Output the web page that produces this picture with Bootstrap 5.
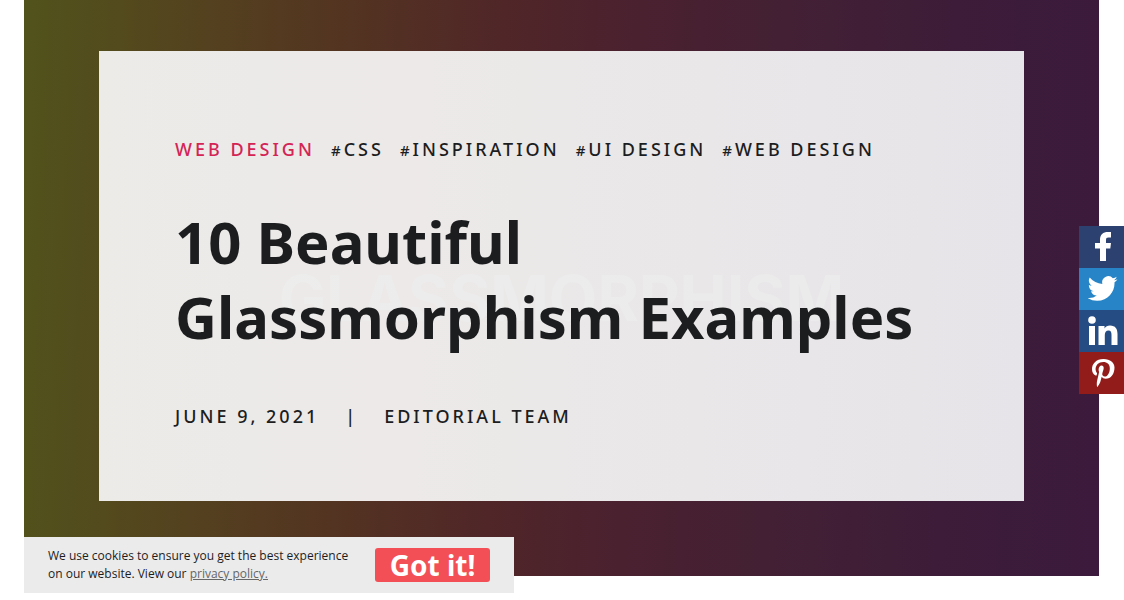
<!DOCTYPE html>
<html lang="en">
<head>
<meta charset="utf-8">
<meta name="viewport" content="width=device-width, initial-scale=1">
<title>10 Beautiful Glassmorphism Examples</title>
<link rel="stylesheet" href="https://cdn.jsdelivr.net/npm/bootstrap@5.3.0/dist/css/bootstrap.min.css">
<style>
  body { font-family: "Noto Sans", "Open Sans", sans-serif; color: #1c1d1f; background: #fff; }
  .hero {
    margin: 0 25px 24px 24px;
    padding: 51px 75px 75px;
    background: linear-gradient(92deg, #51531c 0%, #534a1d 9%, #54411f 17%, #533321 30%, #502628 44%, #4a212f 56%, #432034 70%, #3c1c38 85%, #3b1a3d 100%);
  }
  .hero-word { font: 700 63px/76px "Inter", sans-serif; color: #eff0f0; opacity: .5; padding-top: 44px; }
  .glass { min-height: 450px; padding: 75px 76px 72px; background: linear-gradient(92deg, #ecebe8, #ece9e8 35%, #e9e7e8 65%, #e6e4e8); }
  .meta-line { font-size: 18px; line-height: 24px; font-weight: 500; letter-spacing: 3px; text-transform: uppercase; }
  .meta-line a { color: inherit; text-decoration: none; }
  .meta-line .topic { color: #d42456; }
  .tag-row { column-gap: 16px; padding-top: 11px; }
  .hash { font-size: 15px; }
  .author-row { column-gap: 26px; }
  .headline { font-size: 58px; line-height: 75px; font-weight: 700; margin: 42px 0 50px; }
  .share { top: 226px; }
  .share a { width: 45px; height: 42px; padding-left: 3px; }
  .share svg { width: 30px; height: 32px; fill: #fff; }
  .fb { background: #2d4170; } .tw { background: #2785c7; }
  .li { background: #254c83; } .pin { background: #911c1a; }
  .cookie { left: 24px; bottom: 7px; width: 490px; max-width: calc(100% - 48px); min-height: 56px; padding: 0 24px; background: #ebebeb; font-family: "Open Sans", sans-serif; font-size: 12px; line-height: 18px; }
  .cookie a { color: #666; }
  .cookie .btn { --bs-btn-bg: #f25056; --bs-btn-color: #fff; --bs-btn-hover-bg: #df4248; --bs-btn-hover-color: #fff; width: 115px; height: 34px; border: 0; border-radius: 3px; padding: 0; font-family: "Noto Sans", sans-serif; font-size: 28px; line-height: 34px; font-weight: 700; }
</style>
</head>
<body>
<main class="hero">
  <article class="glass position-relative">
    <div class="hero-word position-absolute top-50 start-50 translate-middle pe-none" aria-hidden="true">GLASSMORPHISM</div>
    <div class="position-relative">
      <nav class="meta-line tag-row d-flex flex-wrap" aria-label="Topics">
        <a class="topic" href="#">Web Design</a>
        <a href="#"><span class="hash">#</span>CSS</a>
        <a href="#"><span class="hash">#</span>Inspiration</a>
        <a href="#"><span class="hash">#</span>UI Design</a>
        <a href="#"><span class="hash">#</span>Web Design</a>
      </nav>
      <h1 class="headline">10 Beautiful Glassmorphism Examples</h1>
      <div class="meta-line author-row d-flex flex-wrap">
        <time datetime="2021-06-09">June 9, 2021</time><span>|</span><a href="#">Editorial Team</a>
      </div>
    </div>
  </article>
</main>
<nav class="share position-fixed end-0 d-flex flex-column" aria-label="Share">
  <a class="fb d-flex align-items-center justify-content-center" href="#" aria-label="Facebook"><svg viewBox="0 0 30 32"><path d="M12 30V17.500H7V12h5V9c0-5.500 3-8 8-8h3v5.500h-2.500c-2 0-2.500.8-2.500 2.500v3h5l-.7 5.500H18V30z"/></svg></a>
  <a class="tw d-flex align-items-center justify-content-center" href="#" aria-label="Twitter"><svg viewBox="0 0 24 24"><path d="M23.600 4.100a9.900 9.900 0 0 1-2.800.8 4.900 4.900 0 0 0 2.200-2.700 10 10 0 0 1-3.100 1.200 4.900 4.900 0 0 0-8.400 4.500A13.900 13.900 0 0 1 1.400 2.800a4.900 4.900 0 0 0 1.500 6.600 4.900 4.900 0 0 1-2.200-.6v.1a4.900 4.900 0 0 0 3.900 4.800 4.900 4.900 0 0 1-2.200.1 4.900 4.900 0 0 0 4.600 3.400A9.900 9.900 0 0 1-.300 19.200a13.900 13.900 0 0 0 7.600 2.200c9.100 0 14.300-7.600 13.900-14.800a10 10 0 0 0 2.400-2.500z"/></svg></a>
  <a class="li d-flex align-items-center justify-content-center" href="#" aria-label="LinkedIn"><svg viewBox="0 0 30 32"><circle cx="4" cy="5" r="3.800"/><path d="M1 11h6v19H1zM10.500 11h6v2.500c1-1.800 3-3 5.500-3 5.500 0 7.500 3.500 7.500 8.500v11h-6V20c0-2.500-.5-4.500-3-4.500s-3.700 2-3.700 4.500v10h-6.300z"/></svg></a>
  <a class="pin d-flex align-items-center justify-content-center" href="#" aria-label="Pinterest"><svg viewBox="0 0 30 32"><path d="M15.500 2C8 2 4 7 4 12c0 3 1.200 5.600 3.700 6.600.4.200.8 0 .9-.4l.4-1.500c.1-.4.100-.6-.2-1-.8-.9-1.200-2-1.200-3.600C7.600 8.300 10.600 5 15.200 5c4.100 0 6.600 2.500 6.600 6.200 0 4.500-2 8.300-5 8.300-1.700 0-2.900-1.400-2.500-3 .5-2 1.400-4.200 1.400-5.600 0-1.300-.7-2.400-2.100-2.400-1.700 0-3 1.700-3 4 0 1.500.5 2.500.5 2.500l-2 8.700c-.6 2.500-.1 5.700 0 6 0 .2.300.3.400.1.200-.2 2.300-2.900 3-5.500l1.200-4.600c.6 1.100 2.300 2 4 2 5.300 0 8.800-4.800 8.800-11.300C26.500 6 22.300 2 15.500 2z"/></svg></a>
</nav>
<aside class="cookie position-fixed d-flex align-items-center justify-content-between" aria-label="Cookie notice">
  <p class="m-0">We use cookies to ensure you get the best experience<br>on our website. View our <a href="#">privacy policy.</a></p>
  <button class="btn" type="button">Got it!</button>
</aside>
<script src="https://cdn.jsdelivr.net/npm/bootstrap@5.3.0/dist/js/bootstrap.bundle.min.js"></script>
</body>
</html>
